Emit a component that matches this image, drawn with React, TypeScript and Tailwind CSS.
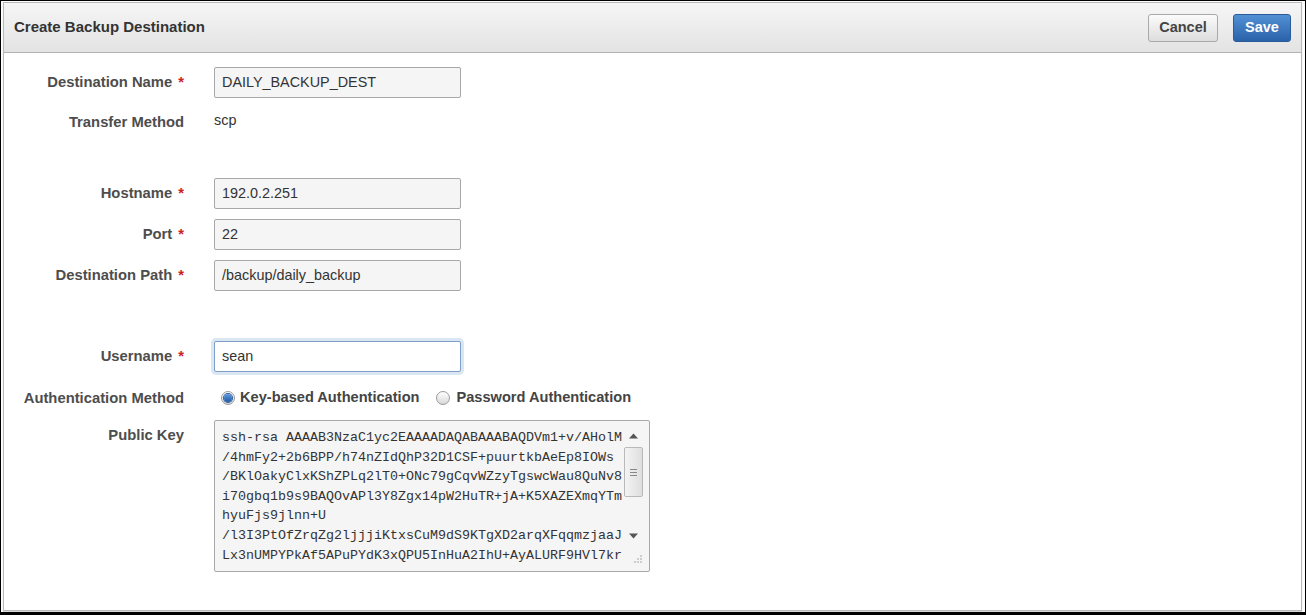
const keyLines = [
  'ssh-rsa AAAAB3NzaC1yc2EAAAADAQABAAABAQDVm1+v/AHolM',
  '/4hmFy2+2b6BPP/h74nZIdQhP32D1CSF+puurtkbAeEp8IOWs',
  '/BKlOakyClxKShZPLq2lT0+ONc79gCqvWZzyTgswcWau8QuNv8',
  'i70gbq1b9s9BAQOvAPl3Y8Zgx14pW2HuTR+jA+K5XAZEXmqYTm',
  'hyuFjs9jlnn+U',
  '/l3I3PtOfZrqZg2ljjjiKtxsCuM9dS9KTgXD2arqXFqqmzjaaJ',
  'Lx3nUMPYPkAf5APuPYdK3xQPU5InHuA2IhU+AyALURF9HVl7kr'
]

function Label({ text, required = false, top = false }: { text: string; required?: boolean; top?: boolean }) {
  return (
    <div
      className={[
        'w-[180px] shrink-0 text-right text-[14.8px] font-bold text-[#4d4d4d]',
        top ? 'pt-[4px]' : ''
      ].join(' ')}
    >
      {text}
      {required && <span className="ml-[6px] text-[#cc2222]">*</span>}
    </div>
  )
}

function TextBox({ value, focused = false }: { value: string; focused?: boolean }) {
  return (
    <div
      className={[
        'flex h-[31px] w-[247px] items-center rounded-[2px] border pl-[7px] text-[14.4px] text-[#333]',
        focused
          ? 'border-[#7d9fc9] bg-white shadow-[0_0_0_3px_#dbe6f3]'
          : 'border-[#a8a8a8] bg-[#f5f5f5]'
      ].join(' ')}
    >
      {value}
    </div>
  )
}

function Row({ label, required, className, children }: { label: string; required?: boolean; className: string; children: React.ReactNode }) {
  return (
    <div className={['flex items-center', className].join(' ')}>
      <Label text={label} required={required} />
      <div className="ml-[30px]">{children}</div>
    </div>
  )
}

function Radio({ checked }: { checked: boolean }) {
  return (
    <span className="flex h-[14px] w-[14px] items-center justify-center rounded-full border border-[#9a9a9a] bg-gradient-to-b from-[#ffffff] to-[#d8d8d8]">
      {checked && <span className="h-[8px] w-[8px] rounded-full bg-gradient-to-b from-[#5d9be0] to-[#1f5aa6] shadow-[0_0_0_1px_#2a5d9a]" />}
    </span>
  )
}

function Scrollbar() {
  return (
    <div className="flex w-[26px] shrink-0 flex-col items-center pt-[12px] pr-[6px] pb-[4px]">
      <svg width="9" height="6" viewBox="0 0 9 6">
        <path d="M0 5.5 L4.5 0.5 L9 5.5 Z" fill="#555" />
      </svg>
      <div className="mt-[8px] flex h-[50px] w-[19px] flex-col items-center justify-center gap-[2px] rounded-[2px] border border-[#b9b9b9] bg-gradient-to-r from-[#f4f4f4] to-[#dedede]">
        <span className="h-[1px] w-[7px] bg-[#888]" />
        <span className="h-[1px] w-[7px] bg-[#888]" />
        <span className="h-[1px] w-[7px] bg-[#888]" />
      </div>
      <svg className="mt-[36px]" width="9" height="6" viewBox="0 0 9 6">
        <path d="M0 0.5 L4.5 5.5 L9 0.5 Z" fill="#555" />
      </svg>
      <svg className="mt-[15px] ml-[10px]" width="10" height="10" viewBox="0 0 10 10">
        <circle cx="8" cy="2" r="0.9" fill="#bbb" />
        <circle cx="5" cy="5" r="0.9" fill="#bbb" />
        <circle cx="8" cy="5" r="0.9" fill="#bbb" />
        <circle cx="2" cy="8" r="0.9" fill="#bbb" />
        <circle cx="5" cy="8" r="0.9" fill="#bbb" />
        <circle cx="8" cy="8" r="0.9" fill="#bbb" />
      </svg>
    </div>
  )
}

export default function App() {
  return (
    <div className="h-[615px] w-[1306px] border-x border-t border-b-[3px] border-black bg-white pl-[2px] pr-[3px] pt-[1px] pb-[1px] font-['Liberation_Sans',Arial,sans-serif]">
      <div className="flex h-full flex-col border border-[#b9b9b9] shadow-[0_1px_1px_rgba(0,0,0,0.15)]">
        <header className="flex h-[50px] shrink-0 items-center justify-between border-b border-[#b3b3b3] bg-gradient-to-b from-[#f6f6f6] to-[#e3e3e3] pl-[10px] pr-[10px]">
          <h1 className="text-[15px] font-bold text-[#333]">Create Backup Destination</h1>
          <div className="flex items-center gap-[15px]">
            <button className="h-[28px] w-[70px] rounded-[3px] border border-[#a9a9a9] bg-gradient-to-b from-[#fbfbfb] to-[#dddddd] text-[14.5px] font-bold text-[#444]">
              Cancel
            </button>
            <button className="h-[28px] w-[58px] rounded-[3px] border border-[#2b5c99] bg-gradient-to-b from-[#5290d4] to-[#2a62a9] text-[14.5px] font-bold text-white">
              Save
            </button>
          </div>
        </header>

        <main className="flex flex-col">
          <Row label="Destination Name" required className="mt-[14px]">
            <TextBox value="DAILY_BACKUP_DEST" />
          </Row>
          <Row label="Transfer Method" className="mt-[10px] h-[28px]">
            <span className="relative -top-[2px] text-[14.4px] text-[#333]">scp</span>
          </Row>

          <Row label="Hostname" required className="mt-[42px]">
            <TextBox value="192.0.2.251" />
          </Row>
          <Row label="Port" required className="mt-[10px]">
            <TextBox value="22" />
          </Row>
          <Row label="Destination Path" required className="mt-[10px]">
            <TextBox value="/backup/daily_backup" />
          </Row>

          <Row label="Username" required className="mt-[50px]">
            <TextBox value="sean" focused />
          </Row>
          <Row label="Authentication Method" className="mt-[16px] h-[20px]">
            <div className="ml-[7px] flex items-center text-[14.6px] font-bold text-[#444]">
              <Radio checked />
              <span className="ml-[5px]">Key-based Authentication</span>
              <span className="ml-[17px]"><Radio checked={false} /></span>
              <span className="ml-[6px]">Password Authentication</span>
            </div>
          </Row>

          <div className="mt-[12px] flex items-start">
            <Label text="Public Key" top />
            <div className="ml-[30px] flex h-[152px] w-[436px] rounded-[2px] border border-[#a8a8a8] bg-[#f5f5f5]">
              <div className="flex-1 overflow-hidden whitespace-pre pl-[7px] pt-[7px] font-['Liberation_Mono','Courier_New',monospace] text-[13.33px] leading-[19.6px] text-[#333]">
                {keyLines.map((line) => (
                  <div key={line}>{line}</div>
                ))}
              </div>
              <Scrollbar />
            </div>
          </div>
        </main>
      </div>
    </div>
  )
}
